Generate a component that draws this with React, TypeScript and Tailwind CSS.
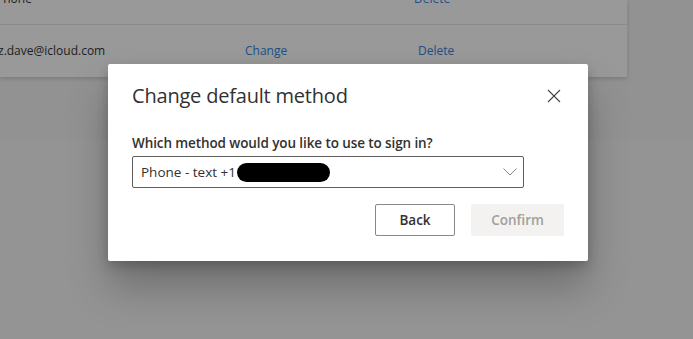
import React from "react";

export default function App() {
  const font = { fontFamily: '"Open Sans", "Noto Sans", sans-serif' };
  return (
    <div className="relative w-[693px] h-[339px] overflow-hidden bg-[#929292]" style={font}>
      {/* underlying page */}
      <div className="flex flex-col">
        <div className="w-[627px] h-[77px] bg-[#999999] shadow-[0_2px_4px_rgba(0,0,0,0.15)] flex flex-col">
          <div className="h-[25px] border-b border-[#8a8a8a] flex text-[12px] leading-[16px]">
            <div className="flex -translate-y-[9px]">
              <span className="w-[418px] text-[#1e1e1e] -ml-[4px]">Phone</span>
              <span className="text-[#1c4f88]">Delete</span>
            </div>
          </div>
          <div className="flex items-center h-[52px] text-[12px]">
            <span className="w-[247px] text-[#1e1e1e] -ml-[2px]">z.dave@icloud.com</span>
            <span className="w-[173px] text-[#1c4f88]">Change</span>
            <span className="text-[#1c4f88]">Delete</span>
          </div>
        </div>
        <div className="h-[63px]" />
        <div className="h-[199px] bg-[#949494]" />
      </div>

      {/* dialog */}
      <div className="absolute left-[108px] top-[64px] w-[480px] h-[197px] bg-white rounded-[2px] shadow-[0_26px_40px_rgba(0,0,0,0.25),0_5px_12px_rgba(0,0,0,0.2)] flex flex-col px-6">
        <div className="flex items-center justify-between h-[62px] pt-[2px]">
          <span className="text-[20px] text-[#323130]" style={{ letterSpacing: "-0.2px" }}>Change default method</span>
          <svg width="14" height="14" viewBox="0 0 14 14" className="mr-[3px] -mt-[1px]">
            <path d="M1 1 L13 13 M13 1 L1 13" stroke="#444" strokeWidth="1.1" fill="none" />
          </svg>
        </div>
        <div className="mt-[7px] text-[13.5px] font-semibold text-[#323130] leading-[20px]" style={{ letterSpacing: "-0.1px" }}>
          Which method would you like to use to sign in?
        </div>
        <div className="mt-[3px] w-[392px] h-[32px] border border-[#605e5c] rounded-[2px] flex items-center pl-[8px] pr-[6px]">
          <span className="text-[13.5px] text-[#323130]">Phone - text +1</span>
          <span className="ml-[1px] w-[93px] h-[19px] rounded-full bg-black" />
          <span className="flex-1" />
          <svg width="14" height="8" viewBox="0 0 14 8">
            <path d="M0.5 0.5 L7 7 L13.5 0.5" stroke="#8a8886" strokeWidth="1" fill="none" />
          </svg>
        </div>
        <div className="mt-[16px] flex justify-end gap-4">
          <button className="w-[80px] h-[32px] border border-[#8a8886] rounded-[2px] text-[13.5px] font-semibold text-[#323130]">
            Back
          </button>
          <button className="w-[93px] h-[32px] bg-[#f3f2f1] rounded-[2px] text-[13.5px] font-semibold text-[#a19f9d]">
            Confirm
          </button>
        </div>
      </div>
    </div>
  );
}
